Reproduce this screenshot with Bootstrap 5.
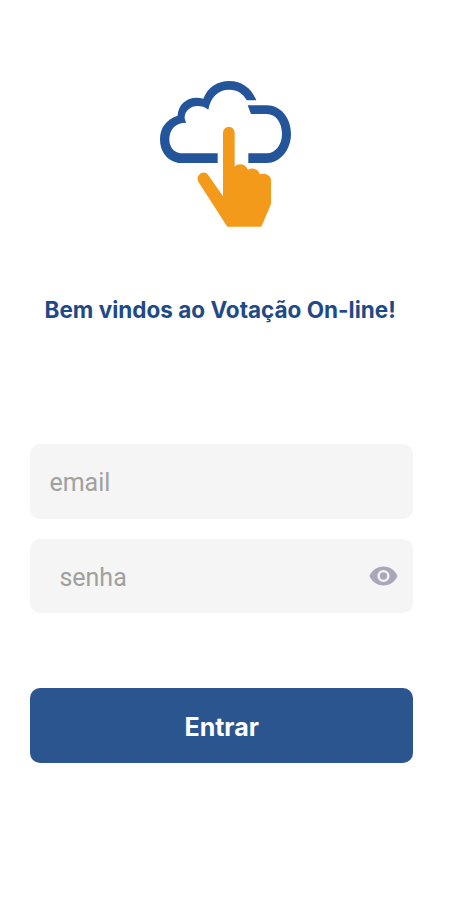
<!DOCTYPE html>
<html lang="pt-BR">
<head>
<meta charset="utf-8">
<meta name="viewport" content="width=device-width, initial-scale=1">
<title>Votação On-line</title>
<link href="https://cdn.jsdelivr.net/npm/bootstrap@5.3.0/dist/css/bootstrap.min.css" rel="stylesheet">
<style>
body { font-family: Inter, sans-serif; }
.login-screen { width: 450px; height: 900px; padding: 70px 37px 0 30.4px; overflow: hidden; }
.brand-logo { width: 150px; height: 170px; margin-left: 119.6px; }
.welcome { margin: 53px 3px 0 0; height: 34px; font-size: 22.5px; line-height: 34px; font-weight: 700; color: #1f4a88; white-space: nowrap; }
.login-form { margin-top: 117px; gap: 20px; }
.login-field { height: 74.5px; border-radius: 10px; background: #f5f5f5; }
.login-field input, .login-field input:focus { font-family: Roboto, sans-serif; font-size: 25px; line-height: 36px; background: transparent; box-shadow: none; color: #555; }
.login-field input::placeholder { color: #a0a0a0; opacity: 1; }
.email-field { padding: 3px 19px 0; }
.password-field { padding: 4px 15px 0 29px; }
.eye-icon { margin-bottom: 3px; }
.btn-enter, .btn-enter:hover { height: 75px; margin-top: 55px; border-radius: 10px; background: #2b558e; color: #fff; font-size: 25px; font-weight: 700; padding: 4px 0 0; border: 0; }
</style>
</head>
<body class="bg-white">
<main class="login-screen d-flex flex-column">
  <svg class="brand-logo flex-shrink-0" viewBox="0 0 450 510" role="img" aria-label="Votação On-line">
    <g fill="#24559a">
      <path d="M203 279H85C50 272 30 245 30 208C30 172 50 148 83 137C84 105 108 83 140 83Q150 83 160 86C173 52 203 33 238 33C275 33 305 55 319 91H290C279 70 262 59 238 59C205 59 182 80 175 119C165 111 154 108 143 108C121 108 106 123 104 140Q103 149 109 158C75 158 58 180 58 208C58 230 70 246 90 250H203Z"/>
      <path d="M293 106H350C393 106 423 145 423 192C423 240 390 279 350 279H295V250H350C378 250 396 222 396 192C396 158 378 132 350 132H303Z"/>
    </g>
    <path fill="#f39a1b" d="M219 379V188a17.5 17.5 0 0 1 35 0V290C264 279 285 280 294 299C307 292 324 296 330 313C345 308 362 315 363 330V402L334 470H232L145 335C136 318 158 298 173 313Z"/>
  </svg>
  <h1 class="welcome text-center">Bem vindos ao Votação On-line!</h1>
  <form class="login-form d-flex flex-column">
    <div class="login-field email-field d-flex align-items-center">
      <input class="form-control border-0 p-0" type="email" placeholder="email" aria-label="email">
    </div>
    <div class="login-field password-field d-flex align-items-center">
      <input class="form-control border-0 p-0" type="password" placeholder="senha" aria-label="senha">
      <svg class="eye-icon flex-shrink-0" width="29" height="20" viewBox="0 0 29 20" aria-hidden="true">
        <path fill="#aaa7bb" fill-rule="evenodd" d="M14.5 .5C8 .5 2.700 4.400 .5 10C2.700 15.600 8 19.500 14.500 19.500S26.300 15.600 28.500 10C26.300 4.400 21 .5 14.500 .5ZM14.500 3.900a6.100 6.100 0 1 1 0 12.200a6.100 6.100 0 1 1 0-12.200Z"/>
        <circle cx="14.500" cy="10" r="3.700" fill="#aaa7bb"/>
      </svg>
    </div>
    <button class="btn btn-enter w-100" type="button">Entrar</button>
  </form>
</main>
<script src="https://cdn.jsdelivr.net/npm/bootstrap@5.3.0/dist/js/bootstrap.bundle.min.js"></script>
</body>
</html>
